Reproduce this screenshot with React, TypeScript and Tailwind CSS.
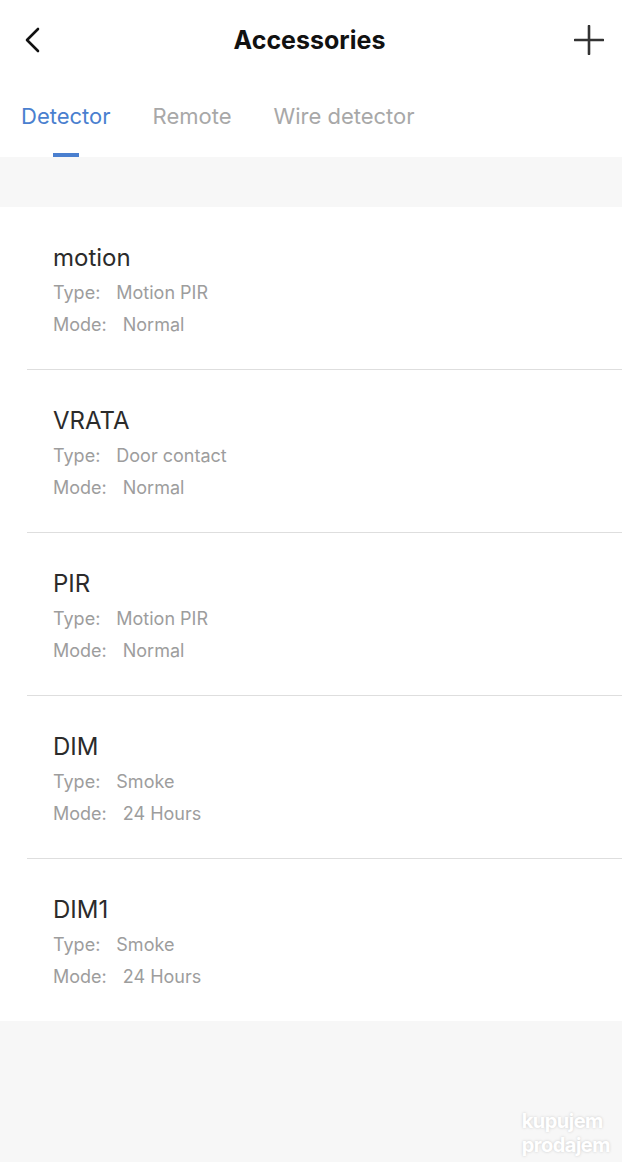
const items = [
  { name: "motion", type: "Motion PIR", mode: "Normal" },
  { name: "VRATA", type: "Door contact", mode: "Normal" },
  { name: "PIR", type: "Motion PIR", mode: "Normal" },
  { name: "DIM", type: "Smoke", mode: "24 Hours" },
  { name: "DIM1", type: "Smoke", mode: "24 Hours" },
];

const App = () => {
  return (
    <div className="min-h-[1162px] w-[622px] bg-[#f7f7f7] font-['Inter','Noto_Sans',sans-serif]">
      <div className="bg-white">
        <div className="flex h-[80px] items-center justify-between px-[22px]">
          <svg width="22" height="28" viewBox="0 0 22 28" fill="none" className="ml-[1px]">
            <path d="M15 3 L4 14 L15 25" stroke="#111" strokeWidth="2.6" strokeLinecap="round" strokeLinejoin="round" />
          </svg>
          <div className="text-[25px] font-bold text-[#111] leading-none">Accessories</div>
          <svg width="30" height="30" viewBox="0 0 30 30" fill="none" className="-mr-[4px]">
            <path d="M15 1 V29 M1 15 H29" stroke="#333" strokeWidth="2.6" strokeLinecap="round" />
          </svg>
        </div>
        <div className="flex h-[77px] items-start gap-[42px] px-[21px] pt-[22px] text-[22px]">
          <div className="relative flex flex-col items-center">
            <span className="leading-[28px] text-[#4a7fcf]">Detector</span>
            <span className="mt-[23px] h-[4px] w-[26px] bg-[#4a7fcf]" />
          </div>
          <span className="leading-[28px] text-[#a8a8a8]">Remote</span>
          <span className="leading-[28px] text-[#a8a8a8]">Wire detector</span>
        </div>
      </div>
      <div className="h-[50px]" />
      <div className="bg-white">
        {items.map((it, i) => (
          <div key={it.name} className={i > 0 ? "ml-[27px] border-t border-[#dedede]" : "ml-[27px]"}>
            <div className="h-[162px] pl-[26px] pt-[35px]">
              <div className="text-[24px] leading-[32px] text-[#2b2b2b]">{it.name}</div>
              <div className="mt-[3px] text-[18px] leading-[32px] text-[#9d9d9d]">
                Type:<span className="ml-[16px]">{it.type}</span>
              </div>
              <div className="text-[18px] leading-[32px] text-[#9d9d9d]">
                Mode:<span className="ml-[16px]">{it.mode}</span>
              </div>
            </div>
          </div>
        ))}
      </div>
      <div className="flex justify-end pr-[12px] pt-[88px]">
        <div className="text-[20px] font-bold leading-[24px] tracking-tight text-white [text-shadow:0_0_3px_rgba(0,0,0,0.18)]">
          <div>kupujem</div>
          <div>prodajem</div>
        </div>
      </div>
    </div>
  );
};

export default App;
